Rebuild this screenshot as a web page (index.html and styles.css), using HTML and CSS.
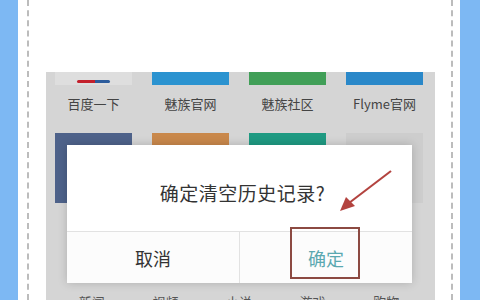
FILE: index.html
```html
<!DOCTYPE html>
<html lang="zh-CN">
	<head>
		<meta charset="UTF-8" />
		<title>清空历史记录</title>
		<link rel="stylesheet" href="styles.css">
	</head>
	<body>
		<div class="page">
			<div class="frame">
				<div class="screen">
					<div class="site-grid">
						<div class="site">
							<div class="tile tile-baidu"><span class="baidu-bar"></span></div>
							<div class="site-name">百度一下</div>
						</div>
						<div class="site">
							<div class="tile tile-blue"></div>
							<div class="site-name">魅族官网</div>
						</div>
						<div class="site">
							<div class="tile tile-green"></div>
							<div class="site-name">魅族社区</div>
						</div>
						<div class="site">
							<div class="tile tile-flyme"></div>
							<div class="site-name">Flyme官网</div>
						</div>

						<div class="site">
							<div class="tile tile-big tile-slate"></div>
							<div class="site-name">新浪</div>
						</div>
						<div class="site">
							<div class="tile tile-big tile-orange"></div>
							<div class="site-name">淘宝</div>
						</div>
						<div class="site">
							<div class="tile tile-big tile-teal"></div>
							<div class="site-name">腾讯</div>
						</div>
						<div class="site">
							<div class="tile tile-big tile-grey"></div>
							<div class="site-name">添加</div>
						</div>
					</div>

					<div class="links">
						<span class="link">新闻</span>
						<span class="link">视频</span>
						<span class="link">小说</span>
						<span class="link">游戏</span>
						<span class="link">购物</span>
					</div>

					<div class="dialog">
						<div class="dialog-title">确定清空历史记录?</div>
						<div class="dialog-buttons">
							<div class="dialog-btn">取消</div>
							<div class="dialog-btn dialog-btn-ok">确定</div>
						</div>
						<div class="mark-box"></div>
					</div>

					<svg class="arrow" width="389" height="228" viewBox="0 0 389 228">
						<line x1="345" y1="99" x2="303" y2="131" stroke="#b3433f" stroke-width="2.2" />
						<polygon points="294,139 300,125 309,134" fill="#b3433f" />
					</svg>
				</div>
			</div>
		</div>
	</body>
</html>
```

FILE: styles.css
```css
body {
	margin: 0;
	height: 300px;
	overflow: hidden;
	background-color: #7db8f3;
	font-family: "Noto Sans CJK SC", "Noto Sans", sans-serif;
}

.page {
	width: 426px;
	height: 300px;
	margin-left: 18px;
	padding: 0 7px 0 9px;
	background-color: #fff;
}

.frame {
	height: 228px;
	padding-top: 72px;
	border-left: 2px dashed #bcbcbc;
	border-right: 2px dashed #bcbcbc;
}

.screen {
	position: relative;
	height: 228px;
	margin: 0 16px 0 17px;
	padding: 0 12px 0 9px;
	overflow: hidden;
	background-color: #d5d5d5;
}

.site-grid {
	display: grid;
	grid-template-columns: repeat(4, 77px);
	column-gap: 20px;
}

.site-name {
	margin: 11px 0 21px;
	line-height: 16px;
	font-size: 13px;
	text-align: center;
	color: #444;
}

.tile {
	height: 13px;
}

.tile-big {
	height: 70px;
}

.tile-baidu {
	position: relative;
	background-color: #dedede;
}

.baidu-bar {
	position: absolute;
	left: 22px;
	top: 8px;
	width: 33px;
	height: 3px;
	border-radius: 2px;
	background: linear-gradient(to right, #c3202c 55%, #2c5c9c 55%);
}

.tile-blue {
	background-color: #2b93d0;
}

.tile-green {
	background-color: #419f58;
}

.tile-flyme {
	background-color: #2a88c9;
}

.tile-slate {
	background-color: #4e628a;
}

.tile-orange {
	background-color: #c9884b;
}

.tile-teal {
	background-color: #1f9a82;
}

.tile-grey {
	background-color: #cdcdcd;
}

.links {
	display: flex;
	margin-top: 43px;
	font-size: 13px;
	line-height: 16px;
	color: #555;
}

.link {
	width: 75px;
	text-align: center;
}

.dialog {
	position: absolute;
	left: 21px;
	top: 73px;
	width: 345px;
	height: 138px;
	display: flex;
	flex-direction: column;
	background-color: #fff;
	box-shadow: 0 0 9px rgba(0, 0, 0, 0.18);
}

.dialog-title {
	height: 87px;
	display: flex;
	align-items: center;
	justify-content: center;
	padding: 8px 0 0 6px;
	box-sizing: border-box;
	font-size: 19px;
	letter-spacing: 0.5px;
	color: #333;
	border-bottom: 1px solid #e2e2e2;
}

.dialog-buttons {
	flex: 1;
	display: flex;
	background-color: #fcfcfc;
}

.dialog-btn {
	flex: 1;
	display: flex;
	align-items: center;
	justify-content: center;
	font-size: 18px;
	color: #333;
}

.dialog-btn + .dialog-btn {
	border-left: 1px solid #e2e2e2;
}

.dialog-btn-ok {
	color: #5aa8b0;
}

.mark-box {
	position: absolute;
	left: 223px;
	top: 82px;
	width: 66px;
	height: 48px;
	border: 2px solid #8c4a42;
}

.arrow {
	position: absolute;
	left: 0;
	top: 0;
	pointer-events: none;
}
```
